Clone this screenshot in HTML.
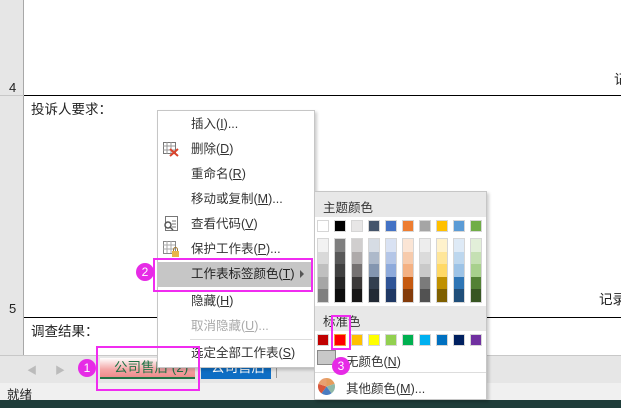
<!DOCTYPE html>
<html><head><meta charset="utf-8"><style>
*{margin:0;padding:0;box-sizing:border-box}
body{width:621px;height:408px;position:relative;overflow:hidden;background:#fff;font-family:"Liberation Sans","Noto Sans CJK SC",sans-serif;font-size:13px;color:#222;white-space:nowrap}
.a{position:absolute}
.mi{position:absolute;left:191px;font-size:12.5px;color:#333;line-height:16px}
.sw{position:absolute;width:12px;height:12px;border:1px solid #d6d6d6}
.col{position:absolute;width:12px;top:238px;height:65px;border:1px solid #d6d6d6}
.col div{height:12.6px}
.mag{position:absolute;border:2px solid #f02cf0}
.num{position:absolute;width:18px;height:18px;border-radius:50%;background:#e62be6;color:#fff;font-size:12px;text-align:center;line-height:18px}
</style></head><body>
<div class="a" style="left:0;top:0;width:24px;height:355px;background:#e6e6e6;border-right:1px solid #a8a8a8"></div>
<div class="a" style="left:0;top:95px;width:24px;height:1px;background:#c8c8c8"></div>
<div class="a" style="left:9px;top:80px;font-size:13px">4</div>
<div class="a" style="left:9px;top:301px;font-size:13px">5</div>
<div class="a" style="left:24px;top:95px;width:597px;height:1px;background:#000"></div>
<div class="a" style="left:24px;top:317px;width:597px;height:1px;background:#000"></div>
<div class="a" style="left:31px;top:98px;font-size:13.5px">投诉人要求：</div>
<div class="a" style="left:31px;top:320px;font-size:13.5px">调查结果：</div>
<div class="a" style="left:614px;top:68px;font-size:13.5px">记</div>
<div class="a" style="left:599px;top:288px;font-size:13.5px">记录</div>
<div class="a" style="left:0;top:355px;width:621px;height:28px;background:#e6e6e6;border-top:1px solid #c8c8c8"></div>
<div class="a" style="left:27px;top:362px;color:#bbb;font-size:10px">◀</div>
<div class="a" style="left:55px;top:362px;color:#bbb;font-size:10px">▶</div>
<div class="a" style="left:100px;top:358px;width:95px;height:21px;background:linear-gradient(#fff,#f3a6a6 60%,#ee8c8c);border-bottom:2px solid #217346;color:#217346;font-size:13.5px;padding-left:14px;line-height:19px">公司售后 (2)</div>
<div class="a" style="left:201px;top:358px;width:70px;height:21px;background:#0e6ec4;color:#fff;font-size:13.5px;padding-left:10px;line-height:19px">公司售后</div>
<div class="a" style="left:276px;top:360px;width:1px;height:18px;background:#999"></div>
<div class="a" style="left:0;top:383px;width:621px;height:17px;background:#f0f0f0"></div>
<div class="a" style="left:7px;top:384px;font-size:12.5px">就绪</div>
<div class="a" style="left:0;top:400px;width:621px;height:8px;background:#1f3d3a"></div>
<div class="a" style="left:157px;top:110px;width:158px;height:258px;background:#fff;border:1px solid #c6c6c6;box-shadow:2px 2px 3px rgba(0,0,0,.2)"></div>
<div class="a" style="left:158px;top:262px;width:154px;height:25px;background:#c6c6c6"></div>
<div class="mi" style="top:116px">插入(<u>I</u>)...</div>
<div class="mi" style="top:141px">删除(<u>D</u>)</div>
<div class="mi" style="top:166px">重命名(<u>R</u>)</div>
<div class="mi" style="top:191px">移动或复制(<u>M</u>)...</div>
<div class="mi" style="top:216px">查看代码(<u>V</u>)</div>
<div class="mi" style="top:241px">保护工作表(<u>P</u>)...</div>
<div class="mi" style="top:266px;color:#222">工作表标签颜色(<u>T</u>)</div>
<div class="a" style="left:300px;top:270px;width:0;height:0;border-left:4px solid #555;border-top:4px solid transparent;border-bottom:4px solid transparent"></div>
<div class="mi" style="top:293px">隐藏(<u>H</u>)</div>
<div class="mi" style="top:318px;color:#aaa">取消隐藏(<u>U</u>)...</div>
<div class="a" style="left:190px;top:339px;width:122px;height:1px;background:#ddd"></div>
<div class="mi" style="top:345px">选定全部工作表(<u>S</u>)</div>
<svg class="a" style="left:163px;top:142px" width="16" height="15"><rect x="0.5" y="0.5" width="12" height="11" fill="none" stroke="#777"/><path d="M0 4H12M0 8H12M4 0V12M8 0V12" stroke="#999"/><path d="M7 7L15 14M15 7L7 14" stroke="#d9442c" stroke-width="2"/></svg>
<svg class="a" style="left:163px;top:216px" width="16" height="16"><rect x="2.5" y="0.5" width="12" height="14" fill="#fff" stroke="#777"/><path d="M9 5H13M9 8H13M9 11H13" stroke="#777"/><circle cx="5" cy="9" r="3" fill="#fff" stroke="#555" stroke-width="1.5"/><path d="M7 11L10 14" stroke="#555" stroke-width="1.5"/></svg>
<svg class="a" style="left:163px;top:241px" width="16" height="16"><rect x="0.5" y="0.5" width="12" height="12" fill="none" stroke="#888"/><path d="M0 4H12M0 8H12M4 0V12M8 0V12" stroke="#aaa"/><rect x="9" y="10" width="7" height="6" fill="#e8b54a"/><path d="M10.5 10V8.5a2 2 0 0 1 4 0V10" fill="none" stroke="#a07830"/></svg>
<div class="mag" style="left:153px;top:258px;width:160px;height:34px"></div>
<div class="num" style="left:136px;top:263px">2</div>
<div class="a" style="left:314px;top:191px;width:173px;height:209px;background:#fff;border:1px solid #c6c6c6;box-shadow:2px 2px 3px rgba(0,0,0,.2)"></div>
<div class="a" style="left:315px;top:192px;width:171px;height:25px;background:#e8e8e8;font-size:12.5px;padding:5px 0 0 8px;color:#333">主题颜色</div>
<div class="a" style="left:315px;top:306px;width:171px;height:25px;background:#e8e8e8;font-size:12.5px;padding:5px 0 0 8px;color:#333">标准色</div>
<div class="sw" style="left:317px;top:220px;background:#fff"></div>
<div class="sw" style="left:334px;top:220px;background:#000"></div>
<div class="sw" style="left:351px;top:220px;background:#e7e6e6"></div>
<div class="sw" style="left:368px;top:220px;background:#44546a"></div>
<div class="sw" style="left:385px;top:220px;background:#4472c4"></div>
<div class="sw" style="left:402px;top:220px;background:#ed7d31"></div>
<div class="sw" style="left:419px;top:220px;background:#a5a5a5"></div>
<div class="sw" style="left:436px;top:220px;background:#ffc000"></div>
<div class="sw" style="left:453px;top:220px;background:#5b9bd5"></div>
<div class="sw" style="left:470px;top:220px;background:#70ad47"></div>
<div class="col" style="left:317px"><div style="background:#f2f2f2"></div><div style="background:#d9d9d9"></div><div style="background:#bfbfbf"></div><div style="background:#a6a6a6"></div><div style="background:#808080"></div></div>
<div class="col" style="left:334px"><div style="background:#7f7f7f"></div><div style="background:#595959"></div><div style="background:#404040"></div><div style="background:#262626"></div><div style="background:#0d0d0d"></div></div>
<div class="col" style="left:351px"><div style="background:#d0cece"></div><div style="background:#aeaaaa"></div><div style="background:#757171"></div><div style="background:#3b3838"></div><div style="background:#171616"></div></div>
<div class="col" style="left:368px"><div style="background:#d6dce4"></div><div style="background:#adb9ca"></div><div style="background:#8496b0"></div><div style="background:#333f4f"></div><div style="background:#222a35"></div></div>
<div class="col" style="left:385px"><div style="background:#d9e2f3"></div><div style="background:#b4c6e7"></div><div style="background:#8eaadb"></div><div style="background:#2f5496"></div><div style="background:#1f3864"></div></div>
<div class="col" style="left:402px"><div style="background:#fbe5d5"></div><div style="background:#f7cbac"></div><div style="background:#f4b183"></div><div style="background:#c55a11"></div><div style="background:#843c0b"></div></div>
<div class="col" style="left:419px"><div style="background:#ededed"></div><div style="background:#dbdbdb"></div><div style="background:#c9c9c9"></div><div style="background:#7b7b7b"></div><div style="background:#525252"></div></div>
<div class="col" style="left:436px"><div style="background:#fff2cc"></div><div style="background:#ffe699"></div><div style="background:#ffd966"></div><div style="background:#bf9000"></div><div style="background:#7f6000"></div></div>
<div class="col" style="left:453px"><div style="background:#deeaf6"></div><div style="background:#bdd7ee"></div><div style="background:#9dc3e6"></div><div style="background:#2e75b5"></div><div style="background:#1f4e79"></div></div>
<div class="col" style="left:470px"><div style="background:#e2efd9"></div><div style="background:#c5e0b3"></div><div style="background:#a8d08d"></div><div style="background:#538135"></div><div style="background:#375623"></div></div>
<div class="sw" style="left:317px;top:334px;background:#c00000"></div>
<div class="sw" style="left:334px;top:334px;background:#ff0000;border:1px solid #f39a3a"></div>
<div class="sw" style="left:351px;top:334px;background:#ffc000"></div>
<div class="sw" style="left:368px;top:334px;background:#ffff00"></div>
<div class="sw" style="left:385px;top:334px;background:#92d050"></div>
<div class="sw" style="left:402px;top:334px;background:#00b050"></div>
<div class="sw" style="left:419px;top:334px;background:#00b0f0"></div>
<div class="sw" style="left:436px;top:334px;background:#0070c0"></div>
<div class="sw" style="left:453px;top:334px;background:#002060"></div>
<div class="sw" style="left:470px;top:334px;background:#7030a0"></div>
<div class="a" style="left:317px;top:350px;width:19px;height:15px;background:#c8c8c8;border:1px solid #888"></div>
<div class="a" style="left:346px;top:351px;font-size:12.5px;color:#333">无颜色(<u>N</u>)</div>
<div class="a" style="left:315px;top:372px;width:171px;height:1px;background:#ddd"></div>
<svg class="a" style="left:318px;top:378px" width="17" height="17" viewBox="-8 -8 16 16"><path d="M0 0L0-8A8 8 0 0 1 7.6-2.5Z" fill="#e59c5c"/><path d="M0 0L7.6-2.5A8 8 0 0 1 4.7 6.5Z" fill="#8fb8a8"/><path d="M0 0L4.7 6.5A8 8 0 0 1-4.7 6.5Z" fill="#4a7cc0"/><path d="M0 0L-4.7 6.5A8 8 0 0 1-7.6-2.5Z" fill="#d8553a"/><path d="M0 0L-7.6-2.5A8 8 0 0 1 0-8Z" fill="#e8a070"/></svg>
<div class="a" style="left:346px;top:378px;font-size:12.5px;color:#333">其他颜色(<u>M</u>)...</div>
<div class="mag" style="left:331px;top:315px;width:20px;height:35px"></div>
<div class="num" style="left:332px;top:357px">3</div>
<div class="mag" style="left:96px;top:346px;width:104px;height:45px"></div>
<div class="num" style="left:78px;top:359px">1</div>
</body></html>
